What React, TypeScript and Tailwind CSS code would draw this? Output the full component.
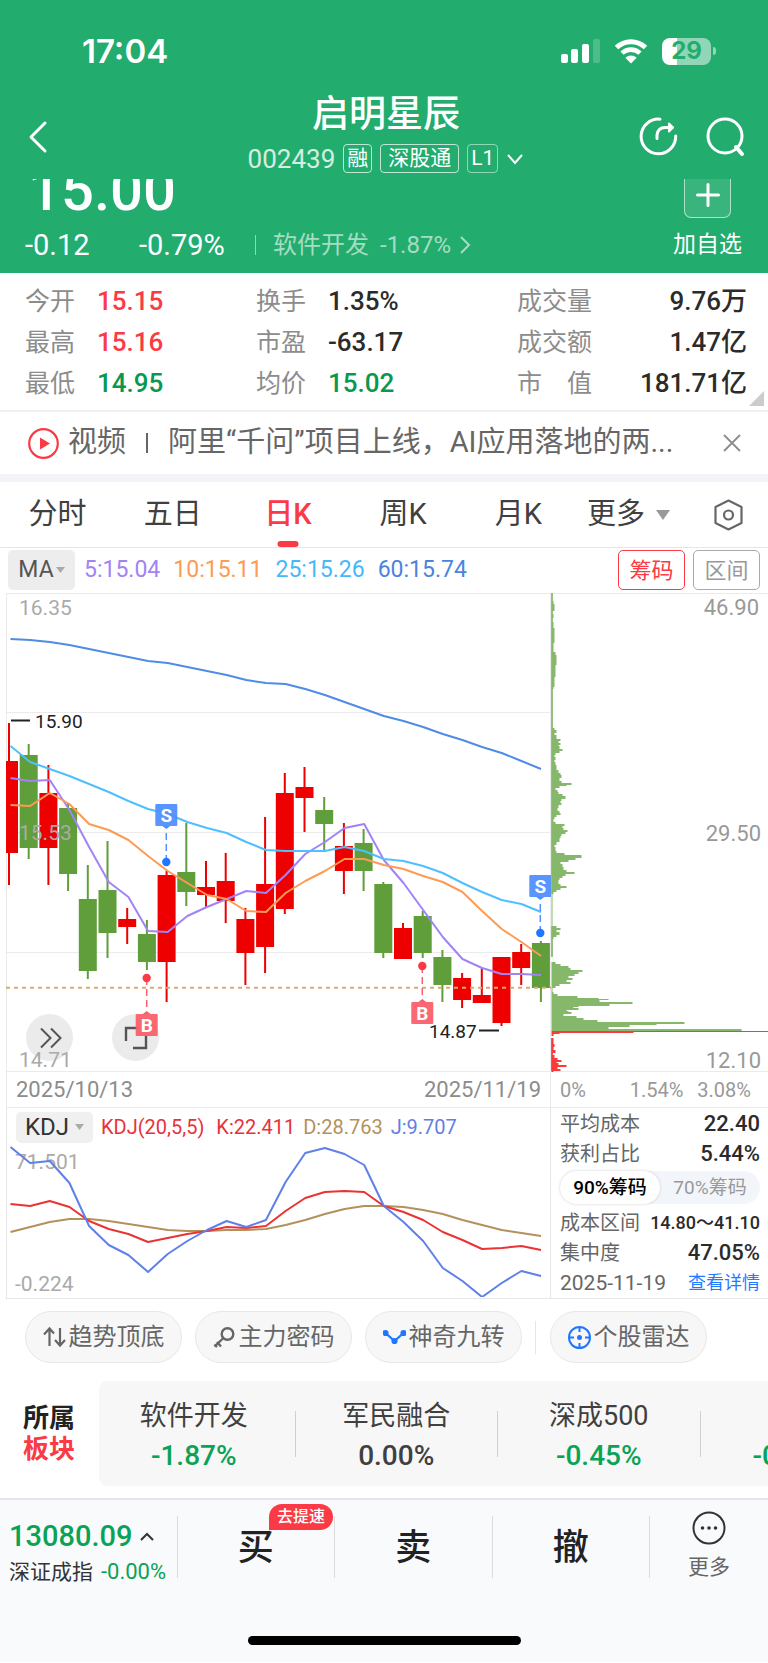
import React, { useState } from 'react';

type Candle = [dir: 'up' | 'down', top: number, bottom: number, high: number, low: number];

// body top, body bottom, high, low in chart space
const CANDLES: Candle[] = [
    ['up', 761, 853, 723, 885],
    ['down', 755, 848, 744, 859],
    ['up', 793, 848, 765, 885],
    ['down', 808, 874, 803, 891],
    ['down', 899, 971, 865, 979],
    ['down', 890, 933, 841, 958],
    ['up', 919, 927, 908, 944],
    ['down', 934, 962, 920, 970],
    ['up', 875, 962, 871, 1002],
    ['down', 872, 892, 823, 906],
    ['up', 887, 895, 861, 908],
    ['up', 881, 901, 853, 923],
    ['up', 919, 953, 908, 985],
    ['up', 884, 947, 817, 973],
    ['up', 793, 909, 773, 914],
    ['up', 787, 798, 767, 832],
    ['down', 810, 824, 797, 851],
    ['up', 846, 871, 823, 894],
    ['down', 843, 871, 829, 891],
    ['down', 884, 953, 882, 958],
    ['up', 928, 959, 923, 959],
    ['down', 916, 953, 911, 958],
    ['down', 957, 985, 950, 1002],
    ['up', 978, 1000, 973, 1008],
    ['up', 995, 1003, 968, 1003],
    ['up', 957, 1023, 957, 1026],
    ['up', 952, 968, 944, 985],
    ['down', 943, 988, 941, 1002],
];

const MA5 = [778, 781, 780, 810, 847, 882, 897, 931, 932, 916, 907, 899, 891, 893, 875, 854, 842, 828, 824, 860, 883, 910, 937, 959, 968, 974, 974, 975];
const MA10 = [805, 806, 793, 804, 824, 830, 840, 856, 871, 883, 895, 899, 911, 912, 893, 881, 871, 859, 859, 865, 869, 876, 882, 892, 911, 929, 942, 956];
const MA25 = [746, 762, 769, 776, 784, 792, 801, 809, 814, 822, 828, 833, 842, 850, 851, 851, 851, 847, 851, 859, 861, 866, 873, 883, 892, 900, 904, 912];
const MA60 = [639, 640, 642, 645, 649, 653, 657, 661, 663, 667, 671, 675, 680, 683, 684, 689, 695, 702, 709, 716, 721, 727, 734, 740, 747, 753, 761, 769];

const KDJ_J = [1147, 1163, 1161, 1183, 1226, 1245, 1255, 1272, 1254, 1241, 1230, 1221, 1227, 1220, 1182, 1153, 1148, 1154, 1165, 1206, 1222, 1241, 1268, 1281, 1297, 1283, 1271, 1276];
const KDJ_K = [1204, 1206, 1201, 1207, 1221, 1229, 1234, 1242, 1238, 1234, 1231, 1227, 1228, 1226, 1211, 1198, 1192, 1191, 1192, 1206, 1212, 1220, 1232, 1240, 1249, 1248, 1246, 1250];
const KDJ_D = [1232, 1227, 1222, 1219, 1219, 1221, 1224, 1227, 1230, 1231, 1231, 1230, 1230, 1229, 1225, 1220, 1214, 1209, 1206, 1206, 1207, 1210, 1214, 1220, 1225, 1230, 1233, 1236];

// chip distribution, [y, bar length]
const CHIPS_GREEN: [number, number][] = [
    [601, 1], [604, 2], [606, 3], [611, 3], [614, 1], [618, 2], [622, 1], [628, 2], [630, 3], [643, 3], [652, 2], [655, 4], [665, 5], [667, 4], [677, 4], [687, 3], [689, 2],
    [728, 1], [730, 3], [733, 5], [735, 3], [739, 5], [741, 9], [743, 7], [745, 9], [746, 7], [749, 8], [751, 11], [753, 8], [755, 4], [757, 3], [760, 4], [762, 3], [765, 4], [770, 5], [773, 7], [775, 9], [778, 10], [781, 8], [783, 10], [785, 20], [786, 15], [788, 8], [790, 4], [792, 6], [794, 7], [796, 11], [799, 14], [801, 10], [803, 9], [805, 10], [808, 7], [811, 6], [813, 8], [815, 9], [817, 5], [819, 3], [822, 2], [824, 4], [826, 13], [828, 11], [830, 12], [832, 16], [834, 14], [836, 10], [838, 9], [842, 8],
    [845, 5], [847, 3], [851, 4], [853, 5], [855, 13], [858, 30], [860, 24], [862, 17], [864, 9], [867, 11], [870, 12], [872, 15], [874, 23], [876, 14], [878, 11], [880, 8], [884, 7], [886, 9], [888, 15], [890, 9], [892, 5], [894, 2],
    [926, 1], [928, 5], [930, 9], [932, 5], [935, 8], [937, 5], [939, 2], [957, 1], [962, 0], [964, 4], [966, 9], [968, 17], [970, 19], [972, 31], [974, 27], [976, 23], [978, 17], [980, 21], [982, 15], [984, 19], [986, 8], [988, 4], [992, 1],
    [994, 2], [996, 6], [998, 26], [999, 47], [1000, 57], [1002, 48], [1004, 81], [1006, 58], [1007, 27], [1008, 22], [1010, 27], [1011, 15], [1012, 17], [1014, 20], [1016, 12], [1018, 25], [1020, 32], [1022, 46], [1024, 133], [1025, 105], [1027, 78], [1029, 57], [1031, 190],
];
const CHIPS_RED: [number, number][] = [
    [1032, 217], [1033, 82], [1034, 8], [1036, 2], [1038, 0], [1044, 2], [1047, 3], [1050, 2], [1053, 4], [1055, 1], [1058, 3], [1060, 6], [1062, 10], [1063, 5], [1065, 7], [1067, 15], [1069, 6], [1071, 9], [1072, 2],
];

const barX = (i: number) => 9 + i * 19.7;
const linePoints = (ys: number[]) => ys.map((y, i) => `${10.5 + i * 19.65},${y}`).join(' ');
const stepPath = (start: number, rows: [number, number][]) =>
    `M0 ${start}` + rows.map(([y, w]) => ` H${w} V${y}`).join('') + ' H0 Z';

const StatusBar = () => (
    <div className="flex h-[102px] items-center justify-between pr-[52px] pl-[82px]">
        <span className="font-[Inter] text-[33px] leading-none font-semibold">17:04</span>
        <div className="flex items-center gap-[14px]">
            <svg width="39" height="26" viewBox="0 0 39 26" fill="#fff">
                <rect x="0" y="16" width="7" height="9" rx="2" />
                <rect x="10" y="11" width="7" height="14" rx="2" />
                <rect x="21" y="6" width="7" height="19" rx="2" />
                <rect x="32" y="1" width="7" height="24" rx="2" opacity=".2" />
            </svg>
            <svg width="34" height="26" viewBox="0 0 34 26" fill="none" stroke="#fff">
                <path d="M2.5 9.5 A21 21 0 0 1 31.5 9.5" strokeWidth="5" />
                <path d="M8 15.2 A13 13 0 0 1 26 15.2" strokeWidth="4.6" />
                <path d="M17 25.5 L11.3 19.8 A8.2 8.2 0 0 1 22.7 19.8 Z" fill="#fff" stroke="none" />
            </svg>
            <div className="flex items-center">
                <div className="flex h-[27px] w-[49px] items-center justify-center rounded-[8px] bg-linear-to-r from-white from-30% to-[#91d6b6] to-30% font-[Inter] text-[24px] leading-none font-bold text-[#22ac6e]">
                    29
                </div>
                <div className="ml-[2px] h-[8px] w-[3px] rounded-r-full bg-[#91d6b6]" />
            </div>
        </div>
    </div>
);

const Header = () => (
    <header className="bg-[#22ac6e] text-white">
        <StatusBar />
        <div className="flex h-[77px] items-start justify-between pr-[20px] pl-[24px]">
            <button type="button" aria-label="返回" className="mt-[17px] w-[110px]">
                <svg width="28" height="36" viewBox="0 0 28 36" fill="none" stroke="#fff" strokeWidth="3" strokeLinecap="round" strokeLinejoin="round">
                    <path d="M21 4 L7 18 L21 32" />
                </svg>
            </button>
            <div className="flex flex-col items-center">
                <h1 className="-mt-[6px] text-[37px] leading-[38px] font-medium">启明星辰</h1>
                <div className="mt-[10px] flex items-center gap-[8px] text-[21px] leading-none">
                    <span className="text-[26px] text-white/80">002439</span>
                    <span className="flex h-[29px] items-center rounded-[4px] border border-white/70 px-[3px]">融</span>
                    <span className="flex h-[29px] items-center rounded-[4px] border border-white/70 px-[7px]">深股通</span>
                    <span className="flex h-[29px] items-center rounded-[4px] border border-white/50 px-[3px]">L1</span>
                    <svg width="18" height="14" viewBox="0 0 18 14" fill="none" stroke="#fff" strokeWidth="2">
                        <path d="M2 3 L9 11 L16 3" />
                    </svg>
                </div>
            </div>
            <div className="mt-[13px] flex w-[110px] justify-end gap-[24px]">
                <button type="button" aria-label="分享">
                    <svg width="44" height="44" viewBox="0 0 44 44" fill="none" stroke="#fff" strokeWidth="3" strokeLinecap="round" strokeLinejoin="round">
                        <path d="M24 4.2 A17.3 17.3 0 1 0 39.7 21" />
                        <path d="M21 23.5 V20 Q22 12.5 29 12.5 H36" />
                        <path d="M33 8.5 L37 12.5 L33 16.5 Z" fill="#fff" strokeWidth="2" />
                    </svg>
                </button>
                <button type="button" aria-label="搜索">
                    <svg width="44" height="44" viewBox="0 0 44 44" fill="none" stroke="#fff" strokeWidth="3">
                        <circle cx="21" cy="21" r="17" />
                        <path d="M32 32 L38 39" strokeWidth="4" strokeLinecap="round" />
                    </svg>
                </button>
            </div>
        </div>
        <div className="flex h-[94px] items-end justify-between overflow-hidden pr-[26px] pb-[13px] pl-[25px]">
            <div>
                <div className="pl-[3px] text-[58px] leading-[58px] font-medium">15.00</div>
                <div className="mt-[11px] flex items-center text-[29px] leading-[30px]">
                    <span className="w-[114px]">-0.12</span>
                    <span className="w-[116px]">-0.79%</span>
                    <span className="mr-[17px] h-[20px] w-px bg-white/50" />
                    <a href="#" className="flex items-center text-[24px] text-white/60">
                        软件开发
                        <span className="ml-[11px]">-1.87%</span>
                        <svg className="ml-[8px]" width="12" height="20" viewBox="0 0 12 20" fill="none" stroke="currentColor" strokeWidth="2">
                            <path d="M2 2 L10 10 L2 18" />
                        </svg>
                    </a>
                </div>
            </div>
            <button type="button" className="flex flex-col items-center">
                <span className="flex h-[47px] w-[47px] items-center justify-center rounded-[7px] border border-white/60 bg-white/10">
                    <svg width="24" height="24" viewBox="0 0 24 24" stroke="#fff" strokeWidth="3" strokeLinecap="round">
                        <path d="M12 1.5 V22.5 M1.5 12 H22.5" />
                    </svg>
                </span>
                <span className="mt-[12px] text-[23px] leading-[30px]">加自选</span>
            </button>
        </div>
    </header>
);

const RED = 'text-[#fa3a44]';
const GREEN = 'text-[#08984f]';
const QUOTES = [
    { label: '今开', value: '15.15', color: RED },
    { label: '换手', value: '1.35%', color: '' },
    { label: '成交量', value: '9.76万', color: '' },
    { label: '最高', value: '15.16', color: RED },
    { label: '市盈', value: '-63.17', color: '' },
    { label: '成交额', value: '1.47亿', color: '' },
    { label: '最低', value: '14.95', color: GREEN },
    { label: '均价', value: '15.02', color: GREEN },
    { label: '市　值', value: '181.71亿', color: '' },
];

const Quotes = () => (
    <section className="relative border-b-2 border-[#f0f0f0] pt-[8px] pr-[21px] pb-[6px] pl-[25px] text-[#2b2b2b]">
        <dl className="grid grid-cols-[231fr_261fr_230fr] text-[26px] leading-[41px]">
            {QUOTES.map((q, i) => (
                <div key={q.label} className={i % 3 === 2 ? 'flex justify-between' : 'flex'}>
                    <dt className="min-w-[72px] text-[25px] text-[#8c8c8c]">{q.label}</dt>
                    <dd className={`font-medium ${q.color}`}>{q.value}</dd>
                </div>
            ))}
        </dl>
        <svg className="absolute right-[4px] bottom-[4px]" width="15" height="15" viewBox="0 0 15 15">
            <path d="M15 0 V15 H0 Z" fill="#ccc" />
        </svg>
    </section>
);

const NewsBar = () => (
    <div className="flex h-[62px] items-center pr-[27px] pl-[28px] text-[29px] text-[#666]">
        <svg width="31" height="31" viewBox="0 0 31 31">
            <circle cx="15.5" cy="15.5" r="14.3" fill="none" stroke="#fa3a44" strokeWidth="2.2" />
            <path d="M12 9.5 L22 15.5 L12 21.5 Z" fill="#fa3a44" />
        </svg>
        <a href="#" className="ml-[9px] flex min-w-0 flex-1 items-center whitespace-nowrap">
            视频
            <span className="mx-[20px] h-[20px] w-[2px] bg-[#666]" />
            <span className="truncate">阿里“千问”项目上线，AI应用落地的两...</span>
        </a>
        <button type="button" aria-label="关闭">
            <svg width="18" height="18" viewBox="0 0 18 18" stroke="#8c8c8c" strokeWidth="1.8">
                <path d="M1 1 L17 17 M17 1 L1 17" />
            </svg>
        </button>
    </div>
);

const PERIODS = ['分时', '五日', '日K', '周K', '月K'];

const PeriodTabs = () => {
    const [active, setActive] = useState('日K');
    return (
        <nav className="border-t-8 border-[#f2f4f9] bg-white text-[29px] text-[#404040]">
            <div className="flex h-[66px] items-center border-b border-[#e6e6e6]">
                {PERIODS.map(p => (
                    <button
                        key={p}
                        type="button"
                        onClick={() => setActive(p)}
                        className={`relative h-full w-[15%] ${p === active ? 'font-medium text-[#fa3a44]' : ''}`}
                    >
                        {p}
                        {p === active && (
                            <span className="absolute bottom-0 left-1/2 h-[6px] w-[21px] -translate-x-1/2 rounded-full bg-[#fa3a44]" />
                        )}
                    </button>
                ))}
                <button type="button" className="ml-[11px] flex items-center gap-[11px]">
                    更多
                    <svg width="14" height="10" viewBox="0 0 14 10">
                        <path d="M0 0 H14 L7 10 Z" fill="#999" />
                    </svg>
                </button>
                <button type="button" aria-label="设置" className="mr-[24px] ml-auto">
                    <svg width="31" height="32" viewBox="0 0 31 32" fill="none" stroke="#666" strokeWidth="2.2" strokeLinejoin="round">
                        <path d="M15.5 1.5 L28.5 8 V24 L15.5 30.5 L2.5 24 V8 Z" />
                        <circle cx="15.5" cy="16" r="4.5" />
                    </svg>
                </button>
            </div>
        </nav>
    );
};

const MaBar = () => (
    <div className="flex h-[44px] items-center px-[8px] text-[22px]">
        <button type="button" className="mr-[9px] flex h-[40px] w-[67px] items-center justify-center gap-[2px] rounded-[5px] bg-[#ededed] text-[23px] text-[#555]">
            MA
            <svg width="9" height="6" viewBox="0 0 9 6">
                <path d="M0 0 H9 L4.5 6 Z" fill="#aaa" />
            </svg>
        </button>
        <div className="flex gap-[13px] text-[23px]">
            <span className="text-[#a283f5]">5:15.04</span>
            <span className="text-[#fd9b55]">10:15.11</span>
            <span className="text-[#45b8fb]">25:15.26</span>
            <span className="text-[#4a84e0]">60:15.74</span>
        </div>
        <button type="button" className="mr-[8px] ml-auto h-[40px] w-[67px] rounded-[5px] border border-[#fa3a44] text-[#fa3a44]">筹码</button>
        <button type="button" className="h-[40px] w-[67px] rounded-[5px] border border-[#aaa] text-[#999]">区间</button>
    </div>
);

interface MarkerProps {
    x: number;
    boxY: number;
    dotY: number;
    type: 'S' | 'B';
}

const Marker: React.FC<MarkerProps> = ({ x, boxY, dotY, type }) => {
    const sell = type === 'S';
    const fill = sell ? '#4f8ffe' : '#f9606b';
    const edge = sell ? boxY + 22 : boxY;
    const tip = sell ? edge + 3 : edge - 3;
    return (
        <g>
            <line x1={x} x2={x} y1={sell ? tip + 4 : tip - 4} y2={dotY} stroke={fill} strokeWidth="1.5" strokeDasharray="7 4" />
            <circle cx={x} cy={dotY} r="4.2" fill={sell ? '#1f77ff' : '#fa3a44'} />
            <path d={`M${x - 4} ${edge} L${x} ${tip} L${x + 4} ${edge} Z`} fill={fill} />
            <rect x={x - 11} y={boxY} width="22" height="22" rx="1" fill={fill} fillOpacity=".95" />
            <text x={x} y={boxY + 18} fontSize="19" fontWeight="700" fill="#fff" textAnchor="middle">{type}</text>
        </g>
    );
};

const CandleChart = () => (
    <div className="relative">
        <button type="button" aria-label="展开" className="absolute bottom-[11px] left-[20px] flex h-[47px] w-[47px] items-center justify-center rounded-full bg-[#ebebeb]">
            <svg width="24" height="24" viewBox="0 0 24 24" fill="none" stroke="#555" strokeWidth="2">
                <path d="M3 2.5 L12.5 12 L3 21.5 M13 2.5 L22.5 12 L13 21.5" />
            </svg>
        </button>
        <button type="button" aria-label="全屏" className="absolute bottom-[11px] left-[106px] flex h-[47px] w-[47px] items-center justify-center rounded-full bg-[#ebebeb]">
            <svg width="24" height="24" viewBox="0 0 24 24" fill="none" stroke="#555" strokeWidth="2.4">
                <path d="M2 15 V2 H15 M22 9 V22 H9" />
            </svg>
        </button>
        <svg className="pointer-events-none relative block h-auto w-full" viewBox="6 592 545 480">
            <g stroke="#ebebeb" strokeWidth="1">
                <path d="M6 593.5 H551 M6 712.5 H551 M6 832.5 H551 M6 952.5 H551 M6 1071.5 H551" />
                <path d="M6.5 593 V1072 M550.5 593 V1072" />
            </g>
            {CANDLES.map(([dir, top, bottom, high, low], i) => {
                const fill = dir === 'up' ? '#ee0000' : '#5f9e3a';
                return (
                    <g key={i} fill={fill}>
                        <rect x={barX(i) - 1} y={high} width="2" height={low - high} />
                        <rect x={barX(i) - 9} y={top} width="18" height={bottom - top} />
                    </g>
                );
            })}
            <path d="M6 987.7 H551" stroke="#d6ab72" strokeWidth="2" strokeDasharray="4 4" />
            <g fill="none" strokeWidth="2" strokeLinejoin="round">
                <polyline points={linePoints(MA60)} stroke="#4f8ce6" />
                <polyline points={linePoints(MA5)} stroke="#a283f5" />
                <polyline points={linePoints(MA10)} stroke="#fd9b55" />
                <polyline points={linePoints(MA25)} stroke="#4fbfff" />
            </g>
            <g fontSize="21" fill="#aaa">
                <text x="19" y="615">16.35</text>
                <text x="19" y="840">15.53</text>
                <text x="19" y="1067">14.71</text>
            </g>
            <g fontSize="19" fill="#222">
                <text x="35" y="728">15.90</text>
                <text x="429" y="1038">14.87</text>
                <path d="M11 720.5 H30 M479 1030.5 H499" stroke="#222" strokeWidth="2" />
            </g>
            <Marker type="S" x={166.3} boxY={804} dotY={862} />
            <Marker type="S" x={540.3} boxY={875} dotY={933} />
            <Marker type="B" x={146.7} boxY={1014} dotY={978} />
            <Marker type="B" x={422.3} boxY={1002} dotY={966} />
        </svg>
    </div>
);

const ChipChart = () => (
    <svg className="block h-auto w-full" viewBox="0 592 217 480">
        <path d="M0 593.5 H217 M0 1071.5 H217" stroke="#ebebeb" />
        <path d={stepPath(593, CHIPS_GREEN)} fill="#86b86c" transform="translate(.5 0)" />
        <path d="M1 593 V894 M1 926 V957" stroke="#86b86c" strokeWidth="1.5" />
        <path d={stepPath(1031, CHIPS_RED)} fill="#f93b3b" transform="translate(.5 0)" />
        <path d="M1 1038 V1071" stroke="#f93b3b" strokeWidth="1.5" />
        <g fontSize="22" fill="#999" textAnchor="end">
            <text x="208" y="615">46.90</text>
            <text x="210" y="841">29.50</text>
            <text x="210" y="1068">12.10</text>
        </g>
    </svg>
);

const KdjPanel = () => (
    <div className="flex h-full flex-col border-x border-b border-[#e6e6e6]">
        <div className="flex h-[35px] items-center pt-[3px] pl-[9px] text-[20px]">
            <button type="button" className="mr-[8px] flex h-[31px] w-[77px] items-center justify-center gap-[6px] rounded-[5px] bg-[#f0f0f0] text-[24px] leading-none text-[#333]">
                KDJ
                <svg width="9" height="6" viewBox="0 0 9 6">
                    <path d="M0 0 H9 L4.5 6 Z" fill="#aaa" />
                </svg>
            </button>
            <span className="mr-[12px] text-[#e8323a]">KDJ(20,5,5)</span>
            <span className="mr-[8px] text-[#e8323a]">K:22.411</span>
            <span className="mr-[8px] text-[#b4915a]">D:28.763</span>
            <span className="text-[#5f7fe6]">J:9.707</span>
        </div>
        <svg className="block h-auto w-full" viewBox="7 1143 543 154">
            <g fontSize="21" fill="#aaa">
                <text x="15" y="1169">71.501</text>
                <text x="15" y="1291">-0.224</text>
            </g>
            <g fill="none" strokeWidth="2" strokeLinejoin="round">
                <polyline points={linePoints(KDJ_D)} stroke="#b4915a" />
                <polyline points={linePoints(KDJ_K)} stroke="#ea3333" />
                <polyline points={linePoints(KDJ_J)} stroke="#5f80e8" />
            </g>
        </svg>
    </div>
);

const ChipStats = () => {
    const [range, setRange] = useState(90);
    return (
        <div className="flex h-full flex-col border-b border-[#e6e6e6] pt-px pr-[8px] pl-[9px] text-[20px] leading-[30px] text-[#666]">
            <div className="flex justify-between">
                平均成本<span className="text-[22px] font-medium text-[#2b2b2b]">22.40</span>
            </div>
            <div className="flex justify-between">
                获利占比<span className="text-[22px] font-medium text-[#2b2b2b]">5.44%</span>
            </div>
            <div className="mt-[2px] mb-[4px] flex h-[33px] rounded-full bg-[#f2f6fa] text-[19px]">
                {[90, 70].map(r => (
                    <button
                        key={r}
                        type="button"
                        aria-pressed={r === range}
                        onClick={() => setRange(r)}
                        className={`flex-1 rounded-full ${r === range ? 'bg-white font-medium text-black shadow-[0_0_3px_rgba(0,0,0,0.18)]' : 'text-[#999]'}`}
                    >
                        {r}%筹码
                    </button>
                ))}
            </div>
            <div className="flex justify-between whitespace-nowrap">
                成本区间<span className="text-[18px] font-medium text-[#2b2b2b]">14.80～41.10</span>
            </div>
            <div className="flex justify-between">
                集中度<span className="text-[22px] font-medium text-[#2b2b2b]">47.05%</span>
            </div>
            <div className="flex justify-between">
                <span className="text-[21px]">2025-11-19</span>
                <a href="#" className="text-[18px] text-[#1f7cff]">查看详情</a>
            </div>
        </div>
    );
};

const PILLS = [
    {
        label: '趋势顶底',
        icon: (
            <svg width="23" height="22" viewBox="0 0 23 22" fill="none" stroke="#666" strokeWidth="2.2">
                <path d="M6.5 20 V3 M1 8.5 L6.5 2.5 L11 7.5 M17 2 V19 M12 14 L17 19.5 L22 14" />
            </svg>
        ),
    },
    {
        label: '主力密码',
        icon: (
            <svg width="23" height="22" viewBox="0 0 23 22" fill="none" stroke="#666" strokeWidth="2.4">
                <circle cx="14.5" cy="8" r="5.8" />
                <path d="M10.5 12 L1.5 20.5 M4 16 L8 20.5 M1.5 18.5 L4 21" />
            </svg>
        ),
    },
    {
        label: '神奇九转',
        icon: (
            <svg width="23" height="22" viewBox="0 0 23 22" fill="#1f77ff" stroke="#1f77ff" strokeWidth="2.2">
                <path d="M2.5 7 L11.5 15 L20.5 7" fill="none" />
                <circle cx="2.5" cy="7" r="2" />
                <circle cx="11.5" cy="15" r="2" />
                <circle cx="20.5" cy="7" r="2" />
            </svg>
        ),
    },
    {
        label: '个股雷达',
        icon: (
            <svg width="23" height="23" viewBox="0 0 23 23" fill="none" stroke="#1f77ff" strokeWidth="2">
                <circle cx="11.5" cy="11.5" r="10.5" />
                <circle cx="11.5" cy="11.5" r="1.5" fill="#1f77ff" />
                <path d="M11.5 1 V6 M11.5 17 V22 M1 11.5 H6 M17 11.5 H22" />
            </svg>
        ),
    },
];

const Pills = () => (
    <div className="flex items-center px-[25px] pt-[12px]">
        {PILLS.map((p, i) => (
            <React.Fragment key={p.label}>
                {i === 3 && <span className="mr-[14px] h-[33px] w-px bg-[#e6e6e6]" />}
                <button type="button" className="mr-[13px] flex h-[52px] w-[157px] items-center justify-center gap-[3px] rounded-full border border-[#e8e8e8] bg-[#f7f7f7] text-[24px] text-[#666]">
                    {p.icon}
                    {p.label}
                </button>
            </React.Fragment>
        ))}
    </div>
);

const SECTORS = [
    { name: '软件开发', change: '-1.87%', color: 'text-[#0aa356]' },
    { name: '军民融合', change: '0.00%', color: 'text-[#404040]' },
    { name: '深成500', change: '-0.45%', color: 'text-[#0aa356]' },
];

const Sectors = () => (
    <section className="mt-[18px] flex items-center pl-[23px]">
        <h2 className="w-[76px] text-[26px] leading-[31px] font-bold text-[#222]">
            所属<br /><span className="text-[#fa3a44]">板块</span>
        </h2>
        <div className="min-w-0 flex-1 overflow-hidden rounded-l-[8px] bg-[#f7f7f7]">
            <div className="-ml-[6px] flex h-[105px] items-center">
                {SECTORS.map(s => (
                    <a key={s.name} href="#" className="flex w-[30%] shrink-0 items-center">
                        <span className="flex-1 pt-[4px] text-center">
                            <span className="block text-[27px] leading-[40px] text-[#404040]">{s.name}</span>
                            <span className={`block text-[28px] leading-[40px] font-medium ${s.color}`}>{s.change}</span>
                        </span>
                        <span className="h-[46px] w-px bg-[#d0d0d0]" />
                    </a>
                ))}
                <span className="shrink-0 pt-[44px] pl-[52px] text-[28px] leading-[40px] font-medium text-[#0aa356]">-0</span>
            </div>
        </div>
    </section>
);

const BottomBar = () => (
    <footer className="mt-[12px] border-t-2 border-[#e4e6ea] bg-[#f9fafc]">
        <div className="flex h-[128px] items-start pt-[16px]">
            <a href="#" className="w-[23%] pl-[9px] whitespace-nowrap">
                <span className="flex items-center gap-[8px] text-[29px] leading-[40px] font-medium text-[#0aa356]">
                    13080.09
                    <svg width="14" height="9" viewBox="0 0 14 9" fill="none" stroke="#333" strokeWidth="2">
                        <path d="M1 8 L7 2 L13 8" />
                    </svg>
                </span>
                <span className="flex items-center gap-[8px] text-[21px] leading-[32px] text-[#333]">
                    深证成指<span className="text-[22px] text-[#0aa356]">-0.00%</span>
                </span>
            </a>
            {['买', '卖', '撤'].map(t => (
                <button key={t} type="button" className="relative h-[62px] flex-1 border-l border-[#dcdcdc] text-[36px] leading-[64px] font-medium text-[#222]">
                    {t}
                    {t === '买' && (
                        <span className="absolute -top-[12px] right-px h-[26px] w-[64px] rounded-full rounded-bl-[4px] bg-[#fa3a44] text-[16px] leading-[26px] text-white">
                            去提速
                        </span>
                    )}
                </button>
            ))}
            <button type="button" className="flex h-[62px] w-[119px] flex-col items-center border-l border-[#dcdcdc] text-[21px] leading-[30px] text-[#666]">
                <svg className="-mt-[6px] mb-[6px] shrink-0" width="36" height="36" viewBox="0 0 36 36">
                    <circle cx="18" cy="18" r="15.5" fill="none" stroke="#333" strokeWidth="2" />
                    <circle cx="11.5" cy="18" r="1.8" fill="#333" />
                    <circle cx="18" cy="18" r="1.8" fill="#333" />
                    <circle cx="24.5" cy="18" r="1.8" fill="#333" />
                </svg>
                更多
            </button>
        </div>
        <div className="flex h-[34px] items-start justify-center pt-[8px]">
            <div className="h-[9px] w-[273px] rounded-full bg-black" />
        </div>
    </footer>
);

export default function App() {
    return (
        <main className="min-h-screen w-full overflow-x-hidden bg-white font-[Roboto,'Noto_Sans_CJK_SC',sans-serif]" lang="zh-CN">
            <Header />
            <Quotes />
            <NewsBar />
            <PeriodTabs />
            <MaBar />
            <section className="ml-[6px] grid grid-cols-[545fr_217fr]">
                <CandleChart />
                <ChipChart />
                <div className="flex h-[36px] items-center justify-between border border-t-0 border-[#ebebeb] px-[9px] text-[22px] text-[#8c8c8c]">
                    <span>2025/10/13</span>
                    <span>2025/11/19</span>
                </div>
                <div className="flex h-[36px] items-center border-b border-[#ebebeb] pr-[17px] pl-[9px] text-[20px] text-[#999]">
                    <span>0%</span>
                    <span className="mr-[14px] ml-auto">1.54%</span>
                    <span>3.08%</span>
                </div>
                <KdjPanel />
                <ChipStats />
            </section>
            <Pills />
            <Sectors />
            <BottomBar />
        </main>
    );
}
